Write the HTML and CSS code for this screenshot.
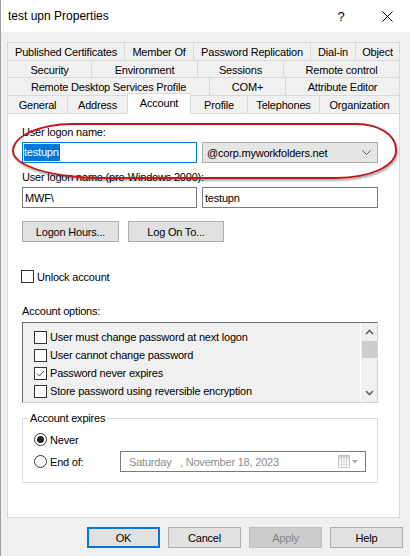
FILE: index.html
```html
<!DOCTYPE html>
<html>
<head>
<meta charset="utf-8">
<link rel="stylesheet" href="styles.css">
</head>
<body>
<div class="window">
  <div class="titlebar">
    <span class="title">test upn Properties</span>
    <span class="tb-btn">?</span>
    <span class="tb-btn">
      <svg width="11" height="11" viewBox="0 0 11 11"><path d="M0.5 0.5 L10.5 10.5 M10.5 0.5 L0.5 10.5" stroke="#000" stroke-width="1" fill="none"/></svg>
    </span>
  </div>

  <div class="tabs">
    <div class="tabrow r1"><div class="tab">Published Certificates</div><div class="tab">Member Of</div><div class="tab">Password Replication</div><div class="tab">Dial-in</div><div class="tab">Object</div></div>
    <div class="tabrow r2"><div class="tab">Security</div><div class="tab">Environment</div><div class="tab">Sessions</div><div class="tab">Remote control</div></div>
    <div class="tabrow r3"><div class="tab">Remote Desktop Services Profile</div><div class="tab">COM+</div><div class="tab">Attribute Editor</div></div>
    <div class="tabrow r4"><div class="tab">General</div><div class="tab">Address</div><div class="tab active">Account</div><div class="tab">Profile</div><div class="tab">Telephones</div><div class="tab">Organization</div></div>
  </div>

  <div class="panel">
    <div class="annot"></div>
    <div class="label l1">User logon name:</div>
    <div class="fieldrow">
      <div class="textbox focused w1"><span class="sel">testupn</span></div>
      <div class="combo w2"><span>@corp.myworkfolders.net</span>
        <svg width="9" height="5" viewBox="0 0 9 5"><polyline points="0.5,0.5 4.5,4.5 8.5,0.5" stroke="#555" stroke-width="1" fill="none"/></svg>
      </div>
    </div>
    <div class="label l2">User logon name (pre-Windows 2000):</div>
    <div class="fieldrow">
      <div class="textbox w1">MWF\</div>
      <div class="textbox w2">testupn</div>
    </div>
    <div class="btnrow">
      <div class="btn b-hours">Logon Hours...</div>
      <div class="btn b-logon">Log On To...</div>
    </div>
    <div class="check unlock"><span class="box"></span>Unlock account</div>
    <div class="label l3">Account options:</div>
    <div class="listbox">
      <div class="items">
        <div class="check item"><span class="box"></span>User must change password at next logon</div>
        <div class="check item"><span class="box"></span>User cannot change password</div>
        <div class="check item"><span class="box"><svg width="11" height="11" viewBox="0 0 11 11"><polyline points="2,5.5 4.5,8 9,3" stroke="#444" stroke-width="1" fill="none"/></svg></span>Password never expires</div>
        <div class="check item"><span class="box"></span>Store password using reversible encryption</div>
      </div>
      <div class="scrollbar">
        <div class="arrow"><svg width="9" height="6" viewBox="0 0 9 6"><polyline points="1,5 4.5,1.5 8,5" stroke="#606060" stroke-width="1.6" fill="none"/></svg></div>
        <div class="thumb"></div>
        <div class="track"></div>
        <div class="arrow"><svg width="9" height="6" viewBox="0 0 9 6"><polyline points="1,1 4.5,4.5 8,1" stroke="#606060" stroke-width="1.6" fill="none"/></svg></div>
      </div>
    </div>
    <fieldset class="group">
      <legend>Account expires</legend>
      <div class="radio r-never"><span class="circle on"></span>Never</div>
      <div class="endrow">
        <div class="radio r-end"><span class="circle"></span>End of:</div>
        <div class="datepicker">
          <span class="date">Saturday &nbsp;&nbsp;, November 18, 2023</span>
          <svg width="22" height="13" viewBox="0 0 22 13">
            <rect x="0.5" y="0.5" width="11" height="12" fill="#fff" stroke="#c8c8c8"/>
            <path d="M1 4.5 H11 M1 7 H11 M1 9.5 H11 M3.5 3 V12 M6 3 V12 M8.5 3 V12" stroke="#dcdcdc" stroke-width="1"/>
            <rect x="1" y="1" width="10" height="2" fill="#d0d0d0"/>
            <polygon points="14,5 20,5 17,8.5" fill="#a8a8a8"/>
          </svg>
        </div>
      </div>
    </fieldset>
  </div>

  <div class="footer">
    <div class="btn fbtn default">OK</div>
    <div class="btn fbtn">Cancel</div>
    <div class="btn fbtn disabled">Apply</div>
    <div class="btn fbtn">Help</div>
  </div>
</div>
</body>
</html>
```
FILE: styles.css
```css
* { box-sizing: border-box; }
html, body { margin: 0; padding: 0; }
body {
  width: 410px;
  height: 556px;
  overflow: hidden;
  background: #f0f0f0;
  font-family: "Liberation Sans", Arial, sans-serif;
  font-size: 11px;
  letter-spacing: -0.2px;
  color: #000;
}
.window {
  height: 556px;
  border-left: 1px solid #a0a0a0;
  display: flex;
  flex-direction: column;
}
.titlebar {
  height: 32px;
  background: #fff;
  display: flex;
  align-items: center;
  padding-left: 7px;
  font-size: 12px;
  letter-spacing: 0;
}
.title { flex: 1; }
.tb-btn {
  width: 46px;
  height: 32px;
  display: flex;
  align-items: center;
  justify-content: center;
  font-size: 13px;
}

/* tabs */
.tabs {
  margin-top: 10px;
  margin-left: 6px;
  width: 393px;
  display: flex;
  flex-direction: column;
}
.tabrow { display: grid; height: 18px; }
.tabrow.r2 { height: 17px; }
.r1 { grid-template-columns: 117px 69px 117px 45px 45px; }
.r2 { grid-template-columns: 84px 106px 86px 117px; }
.r3 { grid-template-columns: 202px 76px 115px; }
.r4 { grid-template-columns: 60px 60px 64px 56px 72px 81px; }
.tab {
  display: flex;
  align-items: center;
  justify-content: center;
  background: #f0f0f0;
  border-top: 1px solid #d9d9d9;
  border-left: 1px solid #d9d9d9;
  white-space: nowrap;
  padding-top: 1px;
}
.tab:last-child { border-right: 1px solid #d9d9d9; }
.tab.active {
  position: relative;
  z-index: 2;
  background: #fff;
  margin-top: -2px;
  margin-bottom: -1px;
  border-right: 1px solid #d9d9d9;
  padding-top: 0;
  padding-bottom: 2px;
}
.tab.active + .tab { border-left: none; }

/* panel */
.panel {
  position: relative;
  margin-left: 6px;
  width: 393px;
  height: 405px;
  background: #fff;
  border: 1px solid #d9d9d9;
  padding-left: 14px;
  display: flex;
  flex-direction: column;
  align-items: flex-start;
}
.annot {
  position: absolute;
  left: 4px;
  top: 9px;
  width: 385px;
  height: 56px;
  border: 2px solid #c3161c;
  border-radius: 60px 40px 60px 90px / 28px 26px 28px 28px;
  box-shadow: 1px 2px 2px rgba(0,0,0,0.3);
  pointer-events: none;
  z-index: 3;
}
.label { height: 13px; line-height: 13px; white-space: nowrap; }
.l1 { margin-top: 12px; }
.l2 { margin-top: 8px; }
.l3 { margin-top: 22px; }
.fieldrow { display: flex; gap: 5px; margin-top: 3px; }
.textbox {
  height: 21px;
  border: 1px solid #7a7a7a;
  background: #fff;
  display: flex;
  align-items: center;
  padding-left: 2px;
}
.textbox.focused { border-color: #0078d7; padding-left: 1px; }
.w1 { width: 175px; }
.w2 { width: 176px; }
.sel {
  background: #0078d7;
  color: #fff;
  padding: 2px 1px 2px 0;
  line-height: 13px;
}
.combo {
  height: 21px;
  border: 1px solid #adadad;
  background: #e5e5e5;
  display: flex;
  align-items: center;
  justify-content: space-between;
  padding: 0 6px 0 4px;
}
.btnrow { display: flex; gap: 9px; margin-top: 13px; }
.btn {
  height: 21px;
  border: 1px solid #adadad;
  background: #e1e1e1;
  display: flex;
  align-items: center;
  justify-content: center;
  white-space: nowrap;
}
.b-hours { width: 97px; }
.b-logon { width: 96px; }

.check { display: flex; align-items: center; white-space: nowrap; }
.box {
  width: 13px;
  height: 13px;
  border: 1px solid #333;
  background: #fff;
  margin-right: 3px;
  display: flex;
  align-items: center;
  justify-content: center;
  flex: none;
}
.unlock { margin-top: 28px; height: 13px; margin-left: -1px; }

.listbox {
  margin-top: 4px;
  width: 356px;
  height: 81px;
  border-top: 1px solid #6e6e6e;
  border-left: 1px solid #6e6e6e;
  border-right: 1px solid #d4d4d4;
  border-bottom: 1px solid #d4d4d4;
  background: #f0f0f0;
  display: flex;
}
.items { flex: 1; padding: 5px 0 0 11px; }
.item { height: 18px; }
.scrollbar {
  width: 17px;
  border-left: 1px solid #fff;
  display: flex;
  flex-direction: column;
  align-items: center;
}
.arrow {
  width: 16px;
  height: 18px;
  display: flex;
  align-items: center;
  justify-content: center;
}
.thumb { width: 15px; height: 17px; background: #cdcdcd; }
.track { flex: 1; }

.group {
  margin: 9px 0 0 0;
  width: 356px;
  height: 71px;
  border: 1px solid #dcdcdc;
  padding: 0;
  min-width: 0;
}
.group legend {
  margin-left: 5px;
  padding: 0 2px;
  line-height: 13px;
  height: 13px;
}
.radio { display: flex; align-items: center; white-space: nowrap; height: 13px; }
.r-never { margin: 8px 0 0 11px; }
.circle {
  width: 13px;
  height: 13px;
  border: 1px solid #333;
  border-radius: 50%;
  background: #fff;
  margin-right: 3px;
  display: flex;
  align-items: center;
  justify-content: center;
  flex: none;
}
.circle.on::after {
  content: "";
  width: 7px;
  height: 7px;
  border-radius: 50%;
  background: #222;
}
.endrow { display: flex; align-items: center; margin: 5px 0 0 11px; height: 21px; }
.r-end { width: 86px; }
.datepicker {
  width: 246px;
  height: 21px;
  border: 1px solid #7a7a7a;
  background: #fff;
  display: flex;
  align-items: center;
  justify-content: space-between;
  padding: 0 5px 0 8px;
  color: #8c8c8c;
}
.datepicker .date { white-space: nowrap; }

.footer {
  display: flex;
  justify-content: flex-end;
  gap: 8px;
  margin-top: 9px;
  padding-right: 7px;
}
.fbtn { width: 73px; }
.fbtn.default { border: 2px solid #0078d7; }
.fbtn.disabled { background: #cccccc; border-color: #bfbfbf; color: #838383; }
```
